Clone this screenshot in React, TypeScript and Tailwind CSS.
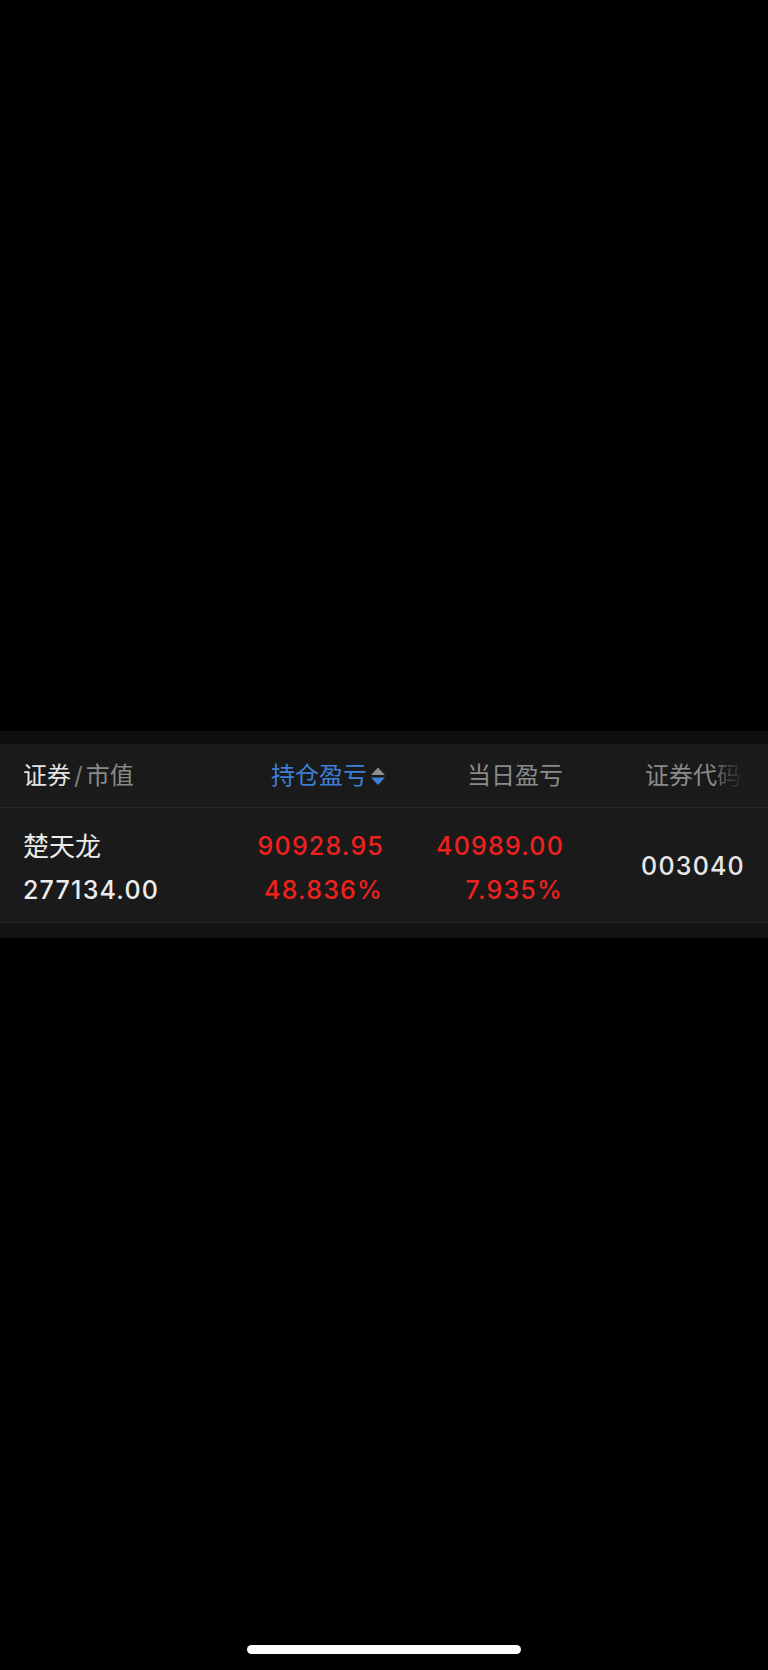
import React from "react";

const font = { fontFamily: 'Inter, "Noto Sans CJK SC", sans-serif' };

const SortIcon = () => (
  <svg width="16" height="18" viewBox="0 0 16 18" className="ml-[3px]">
    <path d="M8 0.5 L15 8 L1 8 Z" fill="#8e8e8e" />
    <path d="M1 10.5 L15 10.5 L8 18 Z" fill="#3d7fd6" />
  </svg>
);

export default function App() {
  return (
    <div className="flex flex-col h-[1670px] bg-black" style={font}>
      <div className="h-[731px]" />
      <div className="h-[13px] bg-[#0e0e0e]" />

      {/* header */}
      <div className="flex h-[64px] items-center bg-[#1a1a1a] text-[24px] border-b border-[#262626]">
        <div className="w-[249px] pl-[23px] flex items-center">
          <span className="text-[#e4e4e4]">证券</span>
          <span className="text-[#7a7a7a] mx-[3px]">/</span>
          <span className="text-[#8a8a8a]">市值</span>
        </div>
        <div className="w-[137px] flex items-center justify-end text-[#3d7fd6]">
          持仓盈亏
          <SortIcon />
        </div>
        <div className="w-[177px] text-right text-[#8a8a8a]">当日盈亏</div>
        <div className="flex-1 pl-[55px] text-center text-[#8a8a8a]">
          证券代
          <span className="bg-gradient-to-r from-[#6a6a6a] to-[#262626] bg-clip-text text-transparent">码</span>
        </div>
      </div>

      {/* row */}
      <div className="flex h-[115px] items-center pt-[7px] bg-[#1a1a1a] text-[25px] font-medium tracking-[1.2px] border-b border-[#262626]">
        <div className="w-[249px] pl-[23px] flex flex-col gap-[6px] text-[#ececec]">
          <span className="font-normal text-[26px] tracking-normal">楚天龙</span>
          <span>277134.00</span>
        </div>
        <div className="w-[134px] flex flex-col gap-[6px] items-end text-[#f0211d]">
          <span className="-mr-[1px]">90928.95</span>
          <span>48.836%</span>
        </div>
        <div className="w-[180px] flex flex-col gap-[6px] items-end text-[#f0211d]">
          <span className="-mr-[1px]">40989.00</span>
          <span>7.935%</span>
        </div>
        <div className="flex-1 pl-[55px] -mt-[4px] text-center text-[#e6e6e6]">003040</div>
      </div>
      <div className="h-[15px] bg-[#141414]" />

      <div className="flex-1" />
      <div className="flex justify-center pb-[16px]">
        <div className="w-[274px] h-[9px] rounded-full bg-white" />
      </div>
    </div>
  );
}
